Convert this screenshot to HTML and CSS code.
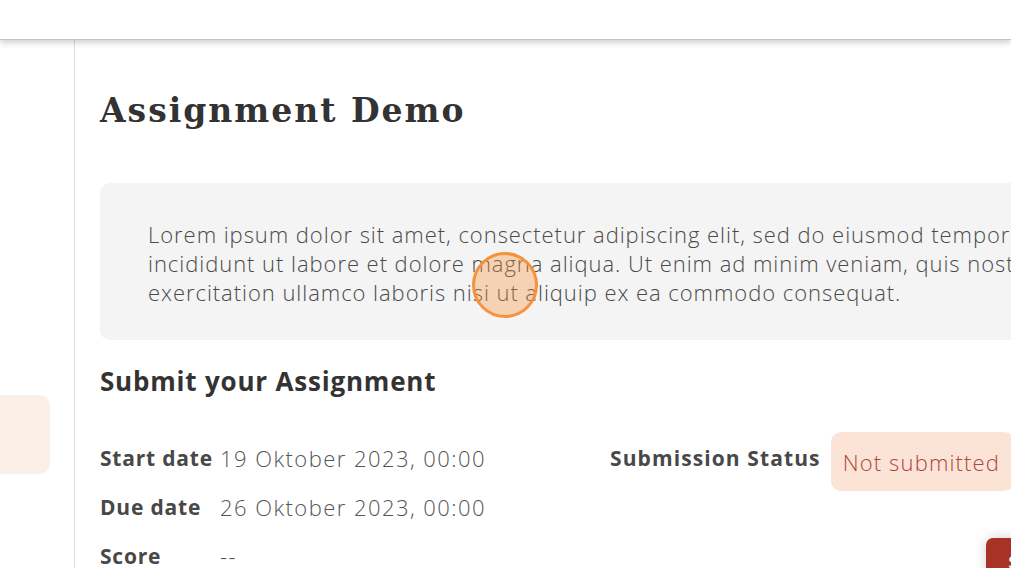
FILE: index.html
```html
<!DOCTYPE html>
<html lang="en">
<head>
<meta charset="utf-8">
<title>Assignment Demo</title>
<link rel="stylesheet" href="styles.css">
</head>
<body>
<header class="topbar"></header>
<div class="layout">
  <aside class="sidebar">
    <div class="side-card"></div>
  </aside>
  <main class="main">
    <h1 class="title">Assignment Demo</h1>
    <div class="desc">
      <p>Lorem ipsum dolor sit amet, consectetur adipiscing elit, sed do eiusmod tempor<br>incididunt ut labore et dolore magna aliqua. Ut enim ad minim veniam, quis nostrud<br>exercitation ullamco laboris nisi ut aliquip ex ea commodo consequat.</p>
    </div>
    <h2 class="subtitle">Submit your Assignment</h2>
    <div class="info">
      <div class="dates">
        <div class="row"><span class="label">Start date</span><span class="value">19 Oktober 2023, 00:00</span></div>
        <div class="row"><span class="label">Due date</span><span class="value">26 Oktober 2023, 00:00</span></div>
        <div class="row"><span class="label">Score</span><span class="value">--</span></div>
      </div>
      <div class="status">
        <div class="status-row"><span class="label status-label">Submission Status</span><span class="badge">Not submitted</span></div>
        <div class="btn-row"><button class="btn">Submit</button></div>
      </div>
    </div>
  </main>
</div>
<div class="cursor"></div>
</body>
</html>
```
FILE: styles.css
```css
html, body {
  margin: 0;
  padding: 0;
}
body {
  width: 1011px;
  height: 568px;
  overflow: hidden;
  background: #fff;
  font-family: "Open Sans", Roboto, "Liberation Sans", sans-serif;
  color: #444;
  position: relative;
}
.topbar {
  height: 39px;
  background: #fff;
  border-bottom: 1px solid #c2c2c2;
  box-shadow: 0 3px 6px rgba(0, 0, 0, 0.18);
  position: relative;
  z-index: 2;
}
.layout {
  display: flex;
  height: 528px;
}
.sidebar {
  width: 75px;
  flex: none;
  border-right: 1px solid #dddddd;
  padding-top: 355px;
  box-sizing: border-box;
}
.side-card {
  width: 50px;
  height: 79px;
  background: #fbf0e8;
  border-radius: 0 10px 10px 0;
}
.main {
  flex: none;
  width: 1100px;
  padding-left: 25px;
}
.title {
  margin: 0;
  padding-top: 47px;
  font-family: "DejaVu Serif", "Liberation Serif", serif;
  font-weight: bold;
  font-size: 33px;
  line-height: 47px;
  color: #333;
  letter-spacing: 2px;
}
.desc {
  margin-top: 49px;
  width: 1000px;
  background: #f4f4f4;
  border-radius: 10px;
  padding: 37px 48px 33px;
}
.desc p {
  margin: 0;
  font-weight: 300;
  font-size: 22px;
  line-height: 29px;
  color: #4a4a4a;
  white-space: nowrap;
  letter-spacing: 0.95px;
}
.subtitle {
  margin: 0;
  padding-top: 23px;
  font-size: 26px;
  line-height: 36px;
  font-weight: bold;
  color: #333;
  letter-spacing: 0.8px;
}
.info {
  display: flex;
  padding-top: 34px;
}
.dates {
  width: 510px;
  flex: none;
}
.row {
  display: flex;
  height: 49px;
  align-items: center;
}
.label {
  font-weight: bold;
  font-size: 21px;
  color: #484848;
  letter-spacing: 0.8px;
}
.row .label {
  width: 120px;
  flex: none;
}
.status-label {
  letter-spacing: 1.1px;
}
.value {
  font-weight: 300;
  font-size: 22px;
  color: #555;
  letter-spacing: 1.45px;
}
.status {
  display: flex;
  flex-direction: column;
}
.status-row {
  display: flex;
  align-items: center;
  height: 49px;
  gap: 10px;
}
.badge {
  display: inline-block;
  background: #fbe4d6;
  color: #b0433a;
  font-weight: 300;
  font-size: 22px;
  letter-spacing: 1.15px;
  padding: 15px 14px 14px 12px;
  border-radius: 10px;
  margin-top: 8px;
}
.btn-row {
  padding-left: 376px;
  padding-top: 56px;
}
.btn {
  width: 90px;
  height: 50px;
  border: none;
  border-radius: 7px;
  background: #a93226;
  color: #fff;
  font-size: 18px;
  padding-left: 22px;
  text-align: left;
  box-shadow: 0 0 12px rgba(0, 0, 0, 0.18);
}
.cursor {
  position: absolute;
  left: 472px;
  top: 252px;
  width: 60px;
  height: 60px;
  border: 3px solid #f7923a;
  border-radius: 50%;
  background: rgba(247, 146, 58, 0.35);
  z-index: 5;
}
```
